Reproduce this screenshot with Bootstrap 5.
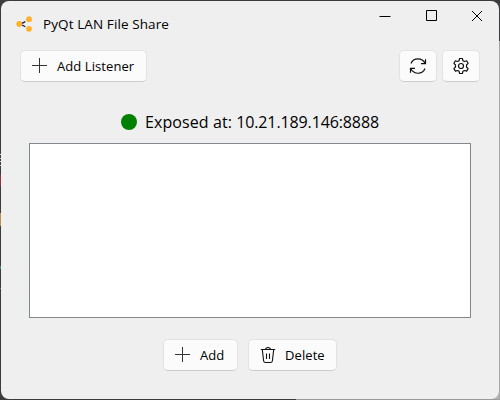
<!DOCTYPE html>
<html lang="en">
<head>
<meta charset="utf-8">
<meta name="viewport" content="width=device-width, initial-scale=1">
<title>PyQt LAN File Share</title>
<link href="https://cdn.jsdelivr.net/npm/bootstrap@5.3.0/dist/css/bootstrap.min.css" rel="stylesheet">
<style>
html, body { height: 100%; }
body { font-family: "Open Sans", "Noto Sans", sans-serif; font-size: 13px; line-height: 18px; color: #000; padding: 1px;
  background:
    linear-gradient(#9b9b9b, #9b9b9b) 296px 399px / 204px 1px no-repeat,
    linear-gradient(#a6a6a6, #a6a6a6) 499px 41px / 1px 359px no-repeat,
    linear-gradient(#b4b4b4, #b4b4b4) 490px 390px / 10px 10px no-repeat,
    linear-gradient(#d8d8d8, #d8d8d8) 0 154px / 1px 1px no-repeat,
    linear-gradient(#b8b8b8, #b8b8b8) 0 158px / 1px 1px no-repeat,
    linear-gradient(#d0d0d0, #d0d0d0) 0 161px / 1px 1px no-repeat,
    linear-gradient(#c8c8c8, #c8c8c8) 0 165px / 1px 1px no-repeat,
    linear-gradient(#8e3540, #8e3540) 0 175px / 1px 11px no-repeat,
    linear-gradient(#b8914a, #b8914a) 0 213px / 1px 13px no-repeat,
    linear-gradient(#3f8a7c, #3f8a7c) 0 266px / 1px 3px no-repeat,
    linear-gradient(#4f8a66, #4f8a66) 0 288px / 1px 1px no-repeat,
    #3c3b3d; }
.window { background: #efefef; border-radius: 8px; }
.titlebar { height: 44px; padding-left: 15px; padding-right: 16px; }
.title { margin: 2px 0 0 10px; font-size: 13.5px; letter-spacing: .1px; }
.app-logo { margin-top: 2px; }
.controls { gap: 34px; margin-top: -15px; }
.toolbar { height: 32px; margin: 5px 19px 0 19px; }
.btn-win { height: 32px; padding: 0 11px; border: 1px solid #e2e2e2; border-bottom-color: #cbcbcb; border-radius: 5px; background: #fbfbfb; font-size: 13px; line-height: 18px; color: #000; gap: 9px; letter-spacing: .08px; white-space: nowrap; }
.btn-icon { width: 38px; padding: 0; }
.status { font-size: 16px; line-height: 22px; margin-top: 29px; }
.label-text { letter-spacing: .08px; }
.address { letter-spacing: -.12px; }
.dot { width: 16px; height: 16px; background: #008000; }
.files { height: 175px; margin: 10px 28px 0; background: #fff; border: 1px solid #828790; }
.actions { margin-top: 21px; gap: 10px; }
.tools { gap: 5px; }
.w-listener { width: 127px; } .w-add { width: 75px; } .w-delete { width: 89px; }
svg { flex: none; display: block; }
</style>
</head>
<body class="overflow-hidden">
<div class="window h-100 d-flex flex-column">
  <header class="titlebar d-flex align-items-center">
    <svg class="app-logo" width="17" height="17" viewBox="0 0 17 17"><path d="M6 7.300 9.300 5.600M6 9l3.300 1.800" stroke="#1b1f3a" stroke-width="1.300"/><g fill="#ffb02e"><circle cx="3.200" cy="8" r="2.900"/><circle cx="13" cy="3.200" r="2.900"/><circle cx="13" cy="12.800" r="2.900"/></g></svg>
    <span class="title">PyQt LAN File Share</span>
    <div class="controls d-flex ms-auto align-items-center">
      <svg width="12" height="12"><path d="M.5 6.500h11" stroke="#000" fill="none"/></svg>
      <svg width="12" height="12"><path d="M1.500.500h10v10h-10z" stroke="#000" fill="none"/></svg>
      <svg width="12" height="12"><path d="m1 1 10 10M11 1 1 11" stroke="#000" fill="none"/></svg>
    </div>
  </header>
  <div class="toolbar d-flex">
    <button class="btn btn-win w-listener d-flex align-items-center"><svg width="16" height="16"><path d="M7.500 0v15M0 7.500h15" stroke="#333" fill="none"/></svg><span>Add Listener</span></button>
    <div class="tools d-flex ms-auto">
      <button class="btn btn-win btn-icon d-flex align-items-center justify-content-center" aria-label="Refresh"><svg width="18" height="18" viewBox="0 0 18 18" fill="none" stroke="#111" stroke-width="1.200"><path d="M2 6.500C4.500.200 13 .200 16.300 6.500M16.500 2.200v4.500H12M16 11.500C13.500 17.800 5 17.800 1.700 11.500M1.500 15.800v-4.500H6"/></svg></button>
      <button class="btn btn-win btn-icon d-flex align-items-center justify-content-center" aria-label="Settings"><svg width="18" height="18" viewBox="0 0 18 18" fill="none" stroke="#111" stroke-width="1.200" stroke-linejoin="round"><circle cx="9" cy="9" r="2.500"/><path d="M7.600 1.500h2.800l.5 2.200 1.500.8 2.200-.7 1.500 2.500L14.500 8v2l1.600 1.600-1.500 2.500-2.200-.6-1.500.8-.5 2.200H7.600l-.5-2.200-1.500-.8-2.200.6-1.500-2.500L3.500 10V8L1.900 6.300l1.500-2.500 2.200.7 1.500-.8z"/></svg></button>
    </div>
  </div>
  <div class="status d-flex align-items-center justify-content-center gap-2"><span class="dot rounded-circle"></span><span><span class="label-text">Exposed at: </span><span class="address">10.21.189.146:8888</span></span></div>
  <div class="files"></div>
  <div class="actions d-flex justify-content-center">
    <button class="btn btn-win w-add d-flex align-items-center"><svg width="16" height="16"><path d="M7.500 0v15M0 7.500h15" stroke="#333" fill="none"/></svg><span>Add</span></button>
    <button class="btn btn-win w-delete d-flex align-items-center"><svg width="16" height="18" viewBox="0 0 16 18" fill="none" stroke="#111" stroke-width="1.100"><path d="M.8 3.500h14.400M5.500 3.500C5.700.8 10.300.8 10.500 3.500M2.300 3.500l1.300 11.300q.2 1.700 1.900 1.700h5q1.700 0 1.900-1.700l1.300-11.300M6.500 7.500v5.500M9.500 7.500v5.500"/></svg><span>Delete</span></button>
  </div>
</div>
<script src="https://cdn.jsdelivr.net/npm/bootstrap@5.3.0/dist/js/bootstrap.bundle.min.js"></script>
</body>
</html>
